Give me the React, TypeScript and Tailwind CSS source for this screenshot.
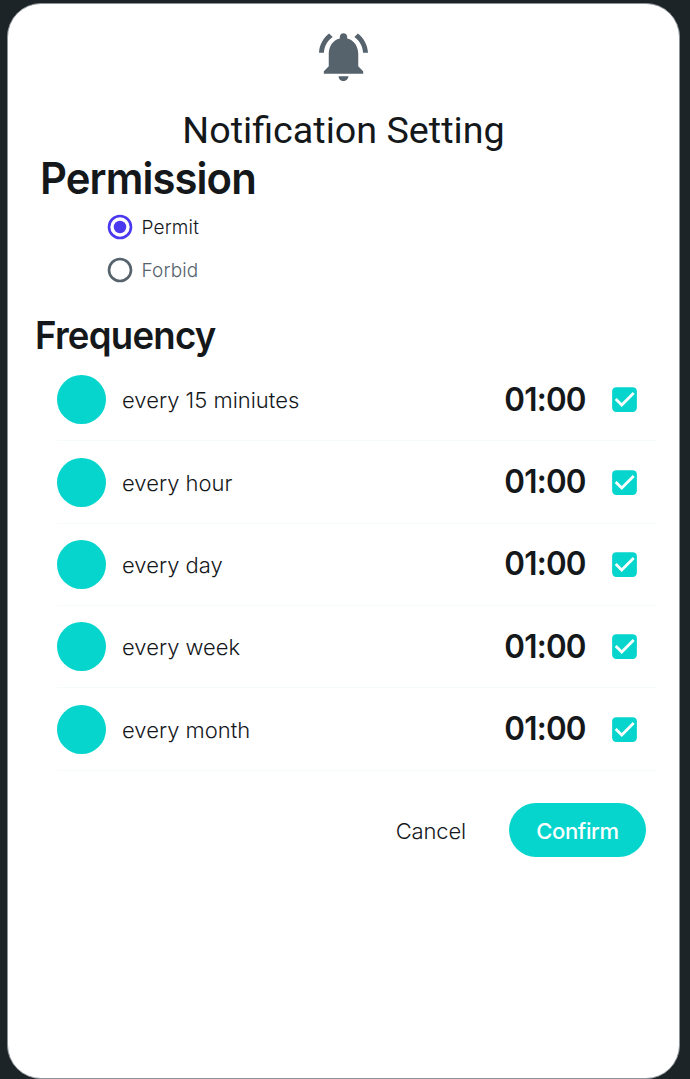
import React from "react";

const rows = ["every 15 miniutes", "every hour", "every day", "every week", "every month"];

function BellIcon() {
  return (
    <svg viewBox="0 0 24 24" className="h-[59px] w-[59px] fill-[#56636d]" aria-hidden="true">
      <path d="M7.58 4.08L6.15 2.65C3.75 4.48 2.17 7.3 2.03 10.5h2c.15-2.65 1.51-4.97 3.55-6.42zm12.39 6.42h2c-.15-3.2-1.73-6.02-4.12-7.85l-1.42 1.43c2.02 1.45 3.39 3.77 3.54 6.42zM18 11c0-3.07-1.64-5.64-4.5-6.32V4c0-.83-.67-1.5-1.5-1.5s-1.5.67-1.5 1.5v.68C7.63 5.36 6 7.92 6 11v5l-2 2v1h16v-1l-2-2v-5zm-6 11c.14 0 .27-.01.4-.04.65-.14 1.18-.58 1.44-1.18.1-.24.15-.5.15-.78h-4c.01 1.1.9 2 2.01 2z" />
    </svg>
  );
}

function Radio({ label, checked }: { label: string; checked: boolean }) {
  return (
    <label className={`flex h-[43px] items-center ${checked ? "text-[#4b39ef]" : "text-[#56636d]"}`}>
      <svg viewBox="0 0 24 24" className="h-[30px] w-[30px]" aria-hidden="true">
        <circle cx="12" cy="12" r="8.8" fill="none" stroke="currentColor" strokeWidth="2.1" />
        {checked && <circle cx="12" cy="12" r="5" fill="currentColor" />}
      </svg>
      <span
        className={`ml-[6.5px] mt-[3px] text-[19px] font-light leading-6 tracking-[0.15px] ${checked ? "text-[#14181b]" : "text-[#56636d]"}`}
      >
        {label}
      </span>
    </label>
  );
}

function FrequencyRow({ label }: { label: string }) {
  return (
    <li className="flex h-[82.35px] items-center border-b border-[#f5fafb]">
      <span className="h-[49px] w-[49px] shrink-0 rounded-full bg-[#06d5cd]" />
      <span className="ml-4 mt-px grow text-[22px] font-light leading-7">{label}</span>
      <span className="-mt-[2px] origin-right scale-x-95 text-[33px] font-semibold leading-10 tracking-[-0.8px]">
        01:00
      </span>
      <svg viewBox="0 0 24 24" className="ml-[22px] mr-[16px] h-[33px] w-[33px] shrink-0" aria-hidden="true">
        <rect x="3" y="3" width="18" height="18" rx="3" fill="#06d5cd" />
        <path d="M5.6 11.6L10 16L18.7 7.3" fill="none" stroke="white" strokeWidth="2" />
      </svg>
    </li>
  );
}

export default function App() {
  return (
    <div className="flex h-[1079px] w-[690px] bg-[#1d2428] pl-[7px] pr-[10px] pt-[3px] font-['Inter',sans-serif] text-[#14181b]">
      <main className="flex h-[1076px] w-full flex-col rounded-[34px] border border-[#8b9297] bg-white">
        <div className="mt-[23px] flex justify-center">
          <BellIcon />
        </div>
        <h1 className="mt-[20px] text-center font-['Roboto',sans-serif] text-[37.7px] leading-[48px]">
          Notification Setting
        </h1>
        <h2 className="-mt-px ml-[32px] origin-left scale-x-95 text-[44px] font-semibold leading-[50px] tracking-[-0.95px]">
          Permission
        </h2>
        <div className="ml-[97px] mt-[2px] flex flex-col">
          <Radio label="Permit" checked />
          <Radio label="Forbid" checked={false} />
        </div>
        <h2 className="ml-[27px] mt-[20px] origin-left scale-x-95 text-[38.5px] font-semibold leading-[48px] tracking-[-0.8px]">
          Frequency
        </h2>
        <ul className="ml-[49px] mr-[22px]">
          {rows.map((label) => (
            <FrequencyRow key={label} label={label} />
          ))}
        </ul>
        <div className="mr-[33px] mt-[32px] flex items-center justify-end">
          <button className="mr-[43px] mt-[3px] text-[22px] font-light leading-7 tracking-[-0.15px]">Cancel</button>
          <button className="h-[54px] w-[137px] rounded-full bg-[#06d5cd] pt-[3px] text-[22px] font-medium leading-7 tracking-[-0.35px] text-white">
            Confirm
          </button>
        </div>
      </main>
    </div>
  );
}
